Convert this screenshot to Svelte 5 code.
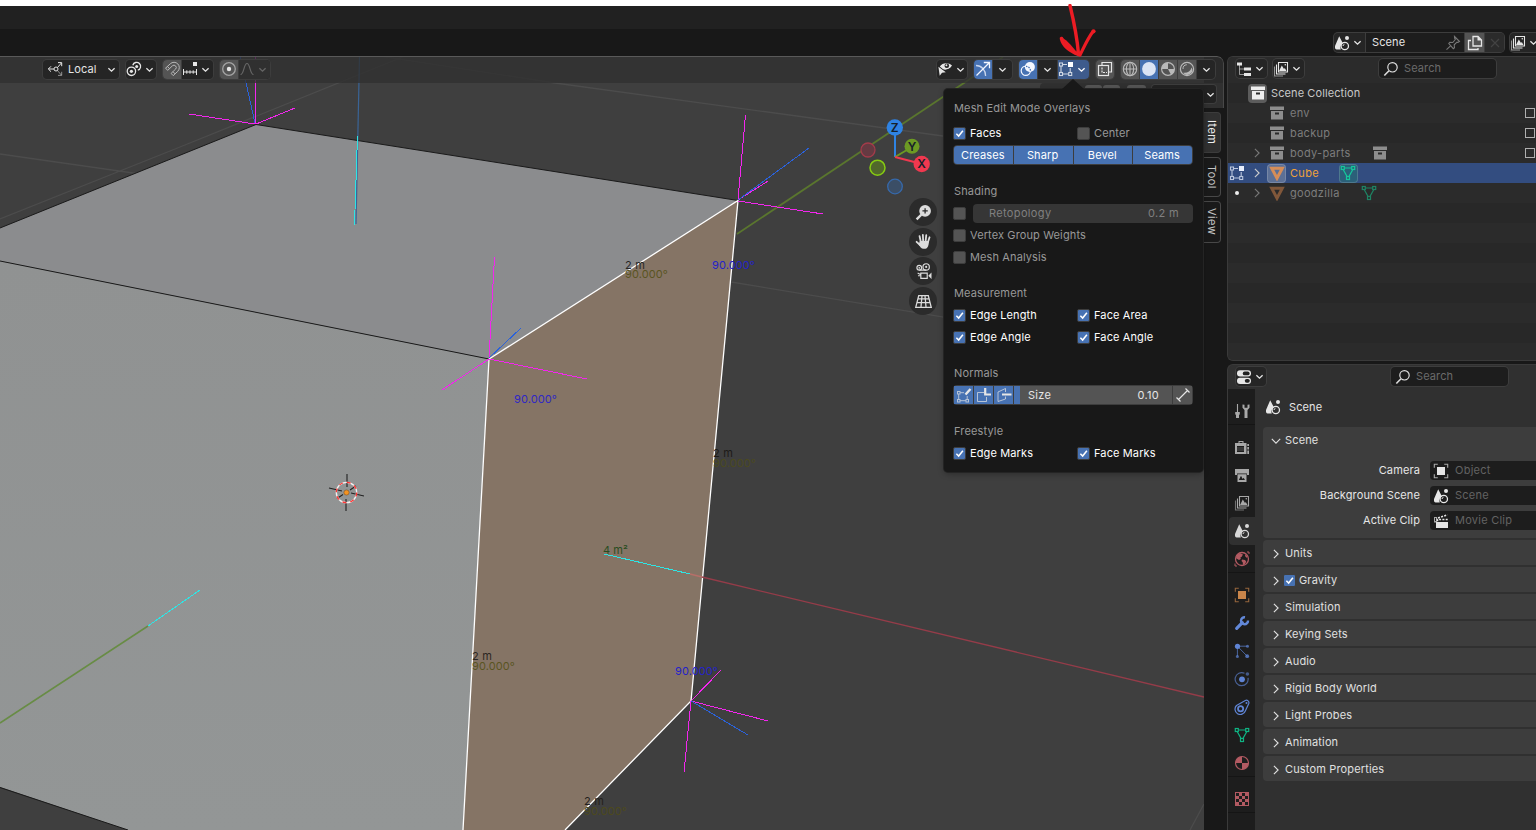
<script>
  const icons = {
    chev: '<path d="M4.700 6.600 8 9.800l3.300-3.200" fill="none" stroke="currentColor" stroke-width="1.400"/>',
    right: '<path d="M5.600 3.200 10.400 8l-4.800 4.800" fill="none" stroke="currentColor" stroke-width="1.300"/>',
    down: '<path d="M3.200 5.600 8 10.400l4.800-4.800" fill="none" stroke="currentColor" stroke-width="1.300"/>',
    orient: '<g fill="none" stroke="currentColor"><circle cx="9" cy="8" r="2"/><path d="M7 8H1.500M4 5.300 1.300 8 4 10.700M10.400 6.600l4-4.600M11 1.600h3.700v3.600"/><path d="m10.400 9.500 4 4.600M11 14.400h3.700v-3.600" opacity=".55"/></g>',
    pivot: '<g fill="none" stroke="currentColor" stroke-width="1.300"><circle cx="5.400" cy="10.300" r="4.200"/><path d="M6.800 4.200a4 4 0 1 1 5 5"/></g><circle cx="5.400" cy="10.300" r="1.600" fill="currentColor"/><circle cx="10.700" cy="5.500" r="1.500" fill="currentColor"/>',
    magnet: '<g fill="none" stroke="currentColor" stroke-width="1"><path d="M1.500 7.200 6.300 2.800a5.300 5.300 0 0 1 7.400 7.600l-4.500 4.200-2.100-2.200 4.500-4.300a2.300 2.300 0 0 0-3.200-3.300L3.800 9.300z"/><path d="m3.400 5.500 2.200 2.200M9 10.700l2.100 2.200"/></g>',
    snapinc: '<path d="M1.500 8v6M14.500 8v6M1.500 11h13M4.800 9.300v3.400M8 9.300v3.400M11.200 9.300v3.400" stroke="currentColor" fill="none"/><rect x="11" y="1" width="4" height="4" fill="currentColor"/>',
    prop: '<circle cx="8" cy="8" r="6.300" fill="none" stroke="currentColor" opacity=".55" stroke-width="1.300"/><circle cx="8" cy="8" r="2.200" fill="currentColor"/>',
    curve: '<path d="M1.500 13.500c3.600 0 3.200-11 6.500-11s2.900 11 6.500 11" fill="none" stroke="currentColor" stroke-width="1.200"/>',
    vis: '<path d="M2.800 5.400C5 1.800 11.200.7 15 4.600 12 9 7.800 9.200 5.800 8z" fill="currentColor"/><circle cx="9.800" cy="4.800" r="2.300" fill="#252525"/><circle cx="9.400" cy="4.300" r="1" fill="currentColor"/><path d="m1.400 5.800 1.300 9 2.300-3.100 3.800-.4z" fill="currentColor"/>',
    gizmo: '<g fill="none" stroke="currentColor" stroke-width="1.300"><path d="M1 4.500c5.500 0 9.600 4.500 9.600 10.500" opacity=".75"/><path d="M1.500 14.500 14 2M8.800 1.500h5.700v5.700"/></g>',
    overlay: '<circle cx="5.800" cy="9.800" r="4.600" fill="none" stroke="currentColor" stroke-width="1.200"/><circle cx="9.900" cy="6" r="5" fill="currentColor"/><path d="M6 5.300a4.600 4.600 0 0 1 4.400 5.400" fill="none" stroke="#4772b3" stroke-width="1.200" stroke-dasharray="1.500 1"/>',
    edit: '<g fill="none" stroke="currentColor" stroke-width="1.100" opacity=".75"><rect x="1.500" y="2" width="3" height="3"/><rect x="1.500" y="11.500" width="3" height="3"/><rect x="10.700" y="11.500" width="3" height="3"/><path d="M4.500 3.500H9M3 5v6.500M4.500 13h6.200M12.200 7v4.500"/></g><rect x="10" y="1" width="5" height="5" fill="currentColor"/>',
    xray: '<g fill="none" stroke="currentColor" stroke-width="1.200"><path d="M5 4V1.500h9.500V11H12"/><rect x="1.500" y="4.500" width="10" height="10"/><path d="M5 6.500v5h5" stroke-dasharray="2 1"/></g>',
    globe: '<g fill="none" stroke="currentColor" stroke-width="1.100"><circle cx="8" cy="8" r="6.700"/><ellipse cx="8" cy="8" rx="3.600" ry="6.700"/><path d="M1.300 8h13.400M8 1.300v13.400"/></g>',
    ball: '<circle cx="8" cy="8" r="6.900" fill="#dbe4f5"/>',
    matprev: '<circle cx="8" cy="8" r="6.400" fill="none" stroke="currentColor" stroke-width="1.200"/><path d="M8 1.600A6.400 6.400 0 0 0 1.600 8H8l3 5.800A6.400 6.400 0 0 0 14.400 8H8z" fill="currentColor"/>',
    rendered: '<circle cx="8" cy="8" r="6.600" fill="none" stroke="currentColor" stroke-width="1.200"/><path d="M12.700 6.500a5 5 0 0 1-8.500 5.200 8 8 0 0 0 8.500-5.200z" fill="currentColor"/><path d="M4 8a4.200 4.200 0 0 1 3.800-4.300" fill="none" stroke="currentColor"/>',
    scene: '<path d="M5.200 1.300 9 8.500a4.500 4.500 0 0 0-2.200 6H2.600C.8 14.500.8 11.500 1.200 10.500z" fill="currentColor"/><circle cx="10.800" cy="11" r="3.700" fill="none" stroke="currentColor" stroke-width="1.300"/><circle cx="13" cy="3" r="2" fill="currentColor"/><path d="M9 11a2 2 0 0 1 1.500-1.800" fill="none" stroke="currentColor"/>',
    pin: '<path d="M9.500 1.500 14.500 6.500 13 7.500l-1-.3-2.800 2.600.3 3-1.200.9L3.800 8.500l1-1.200 3 .2L10.300 4.500l-.7-1.500zM5.800 10.700 1.500 14.700" fill="none" stroke="currentColor" stroke-width="1.100"/>',
    copy: '<path d="M6 1.500h5l3.500 3.500v6H6z" fill="none" stroke="currentColor" stroke-width="1.300"/><path d="M10.500 1v4.500H15z" fill="currentColor"/><path d="M4 5.500H1.500v9H11V13" fill="none" stroke="currentColor" stroke-width="1.300"/>',
    close: '<path d="m4 4 8 8M12 4l-8 8" stroke="currentColor" stroke-width="1.200"/>',
    layers: '<g fill="none" stroke="currentColor" stroke-width="1.100"><path d="M5.500 1.500h9V11h-9zM3.500 3.500v9.500h9" /><path d="M1.500 5.500V15H10" opacity=".6"/></g><path d="m6 10 2.800-5.500L11 8l.8-1L13.500 10z" fill="currentColor"/><circle cx="12.300" cy="3.800" r=".8" fill="currentColor"/>',
    tree: '<path d="M3.500 3v10.500H8M3.500 8H8" fill="none" stroke="currentColor" opacity=".6"/><path d="M1 1.500h5v3H1zM8 6.500h7v3H8zM8 12h7v3H8z" fill="currentColor"/>',
    search: '<circle cx="9.500" cy="6.300" r="4.700" fill="none" stroke="currentColor" stroke-width="1.200"/><path d="m6 9.800-4.700 4.700" stroke="currentColor" stroke-width="1.600"/>',
    coll: '<path d="M1 1.500h14V5H1zM2 6h12v8.500H2z" fill="currentColor"/><rect x="6" y="7.500" width="4" height="2" fill="#2b2b2b"/>',
    mesho: '<path d="M2.700 3.200h10.600L8 13.300z" fill="none" stroke="currentColor" stroke-width="3"/>',
    meshd: '<g fill="none" stroke="currentColor" stroke-width="1.200"><rect x="1.300" y="1.500" width="3" height="3"/><rect x="11.700" y="1.500" width="3" height="3"/><rect x="6.500" y="11.500" width="3" height="3"/><path d="M4.300 3h7.400M3.300 4.800l3.700 6.600M12.700 4.800 9 11.400"/></g>',
    props: '<rect x="1" y="1.300" width="14" height="6.200" rx="3" fill="currentColor"/><rect x="1" y="8.700" width="14" height="6.200" rx="3" fill="currentColor"/><rect x="6.800" y="2.500" width="6.800" height="3.800" rx="1.900" fill="#222"/><rect x="8.800" y="9.900" width="5" height="3.800" rx="1.900" fill="#222"/>',
    tool: '<path d="M3.500 1v8" stroke="currentColor" stroke-width="1.100"/><path d="M1.200 9h4.600v2.200L5 12v3H2v-3l-.8-.8z" fill="currentColor"/><path d="M8.500 1.500v3.300l2 2.200v8h3V7l2-2.200V1.500l-2 .2v3h-3v-3z" fill="currentColor"/>',
    render: '<path d="M4.500 4V2h5v2M1 4h11.500v11H1zM13.300 5H15v10h-1.700z" fill="currentColor"/><path d="M5.500 3h3v1h-3z" fill="#1d1d1d"/><path d="M3 7h7v6H3z" fill="#1d1d1d"/><path d="M3 9h7M3 11h7" stroke="currentColor" opacity=".5" stroke-width=".8"/><path d="M13 7.500h3M13 11h3" stroke="#1d1d1d"/>',
    output: '<path d="M1 2h14v4.500H1zM3.500 7.300h9V15h-9z" fill="currentColor"/><path d="M1 6h2v2H1zM13 6h2v2h-2z" fill="currentColor"/><path d="m4.800 13 2.200-4.200L8.700 12l.9-1.200 1.400 2.200z" fill="#1d1d1d"/>',
    world: '<circle cx="8" cy="8" r="6.500" fill="none" stroke="currentColor" stroke-width="1.300"/><path d="M2.500 4 6 2.300 9 3.500 7.500 6l-1 .3.3 1.700L5 9 2 7.200zM8 8.500l3 .5 1.300 1.700-1.700 2.800L9 14l-.3-2.800L7.500 10zM11.500 3l2.300 3-1.300.7L11 5z" fill="currentColor"/><path d="M1 12.500V15h2M13 1h2v2" fill="none" stroke="currentColor"/>',
    object: '<path d="M4 4h8v8H4z" fill="currentColor"/><path d="M1.300 4.800V1.300h3.500M11.200 1.300h3.500v3.500M14.700 11.200v3.500h-3.500M4.800 14.700H1.300v-3.500" fill="none" stroke="currentColor" opacity=".7" stroke-width="1.100"/>',
    wrench: '<path d="M2.700 13.300 8.300 7.700" stroke="currentColor" stroke-width="3.200" stroke-linecap="round"/><path d="M11 2.300a3.500 3.500 0 1 0 3 3.200" fill="none" stroke="currentColor" stroke-width="2.400"/>',
    particles: '<path d="M3.400 3.200h10M3.400 3.200v10M3.400 3.200l9.800 10" stroke="currentColor" opacity=".7"/><circle cx="3.500" cy="3.300" r="2.600" fill="currentColor"/><circle cx="13.500" cy="3.200" r="1.500" fill="currentColor" opacity=".7"/><circle cx="3.400" cy="13.500" r="1.500" fill="currentColor" opacity=".7"/><circle cx="13.200" cy="13.200" r="1.900" fill="currentColor" opacity=".8"/>',
    physics: '<path d="M10.500 2.300a6.500 6.500 0 1 0 3.500 4.500" fill="none" stroke="currentColor" opacity=".65" stroke-width="1.200"/><circle cx="8" cy="8.300" r="2.900" fill="currentColor"/><circle cx="13.400" cy="3" r="1.800" fill="currentColor" opacity=".6"/>',
    constraint: '<path d="M2.500 6.500 11.300 1.500a2.500 2.500 0 0 1 3.500 3L11.300 12a5.300 5.300 0 1 1-8.800-5.500z" fill="none" stroke="currentColor" stroke-width="1.200"/><circle cx="6.600" cy="9.800" r="2.600" fill="none" stroke="currentColor" stroke-width="1.800"/><circle cx="12.500" cy="4" r="1" fill="currentColor"/>',
    material: '<circle cx="8" cy="8" r="6.500" fill="none" stroke="currentColor" stroke-width="1.200"/><path d="M8 1.500V8H1.500A6.500 6.500 0 0 1 8 1.500zM8 8h6.500A6.500 6.500 0 0 1 8 14.500z" fill="currentColor"/>',
    texture: '<rect x="1.500" y="1.500" width="13" height="13" fill="none" stroke="currentColor"/><path d="M5 2h3v3H5zM11 2h3v3h-3zM2 5h3v3H2zM8 5h3v3H8zM5 8h3v3H5zM11 8h3v3h-3zM2 11h3v3H2zM8 11h3v3H8z" fill="currentColor"/>',
    clip: '<path d="M3 9h12v6H3z" fill="currentColor"/><path d="M4.500 8.200V6.500H15M5 5 14.500 1.800" fill="none" stroke="currentColor" stroke-width="1.600" stroke-dasharray="2 1.300"/><rect x="1.500" y="4.500" width="2" height="4.500" fill="none" stroke="currentColor" opacity=".7"/>',
    nvert: '<g fill="none" stroke="currentColor" opacity=".7"><rect x="1.500" y="4.500" width="2.500" height="2.500"/><rect x="1.500" y="12.500" width="2.500" height="2.500"/><rect x="10" y="12.500" width="2.500" height="2.500"/><path d="M4 5.700h4M2.700 7v5.500M4 13.700h6M11.200 9v3.500"/></g><path d="m9.500 7.500 5-5.500" stroke="currentColor" stroke-width="2.400"/>',
    nedge: '<path d="M8 5.500H1.500v9h9V10" fill="none" stroke="currentColor" opacity=".7"/><path d="M9.200 1v6.500H15" fill="none" stroke="currentColor" stroke-width="2.200"/>',
    nface: '<path d="M9.500 5V1.500L2 5v9.500L9.500 12V9.500" fill="none" stroke="currentColor" opacity=".7"/><path d="M6 7.500h9.500" stroke="currentColor" stroke-width="2"/>',
    nsize: '<path d="M3.500 12.500 12.500 3.500M1.500 10.500l4 4M10.500 1.500l4 4" fill="none" stroke="currentColor" stroke-width="1.200"/>',
    zoom: '<circle cx="9.500" cy="6.500" r="5.500" fill="currentColor"/><path d="M9.500 4v5M7 6.500h5" stroke="#2a2a2a" stroke-width="1.200"/><path d="m6 10-4.500 4.500" stroke="currentColor" stroke-width="2.200"/>',
    hand: '<g stroke="currentColor" stroke-width="1.700" stroke-linecap="round" fill="none"><path d="M5.400 8 4.300 3M7.700 7.500 7.400 1.700M10 7.500l.6-5.500M12.200 8.500l1.500-4.500M5 11.500 1.500 8.300"/></g><path d="M4.500 7.500h8.600c0 3-.8 7-3.300 7.300H8c-2 0-3.500-2-4.500-4z" fill="currentColor"/>',
    camera: '<g fill="none" stroke="currentColor" stroke-width="1.100"><circle cx="4" cy="4.500" r="2.200"/><circle cx="10.500" cy="3.700" r="3"/><path d="M4 6.700h6.500M5.500 9.500h6v5h-6zM5.500 11 2.500 9.500M2.800 12h2.700"/></g><path d="M15.500 9v6L12.500 12z" fill="currentColor"/><circle cx="10.500" cy="3.700" r="1" fill="currentColor"/><circle cx="4" cy="4.500" r=".8" fill="currentColor"/>',
    grid: '<path d="M3.500 2.500h9L15.300 13.500H.7zM2.800 5.500h10.400M1.900 9h12.300M6.600 2.500l-1 11M9.400 2.500l1 11" fill="none" stroke="currentColor" stroke-width="1.200"/>'
  };

  const M = '#f326ee', B = '#2b62d9', C = '#2ee5e5';
  const lines = [
    [189,114,255,124,M],[255.5,56,255.5,124,M],[295,108,256,124,M],[240,56,255,123,B],
    [745.5,115,738,200,M],[768,181,738,200,M],[823,214,738,201,M],[809,148,738,200,B],
    [494.5,257,489,358,M],[442,390,489,359,M],[587,379,489,359,M],[521,328,489,358,B],
    [721,670,691,701,M],[768,721,691,701,M],[684,772,691,701,M],[748,735,691,701,B],
    [357.5,136,354.5,225,C],[604,554,690,574,C],[148,626,200,590,C]
  ];
  const labels = [
    [625,269,'2 m','#262626',20],[625,278,'90.000°','#5a5423',43],[712,269,'90.000°','#2422c8',43],
    [514,403,'90.000°','#2f27c4',43],[713,457,'2 m','#1d1b18',20],[713,467,'90.000°','#4b4a1f',43],
    [603,554,'4 m²','#294d1f',25],[472,660,'2 m','#2b2622',20],[472,670,'90.000°','#5a5423',43],
    [675,675,'90.000°','#2422c8',43],[584,805,'2 m','#231f1c',20],[584,815,'90.000°','#4d4a1d',43]
  ];
  const shading = ['globe', 'ball', 'matprev', 'rendered'];
  const tabs = [
    [['tool', '#a8a8a8']],
    [['render', '#a8a8a8'], ['output', '#a8a8a8'], ['layers', '#a8a8a8'], ['scene', '#d8d8d8'], ['world', '#b35a62']],
    [['object', '#c9854a'], ['wrench', '#6288d8'], ['particles', '#5f84d4'], ['physics', '#5f84d4'], ['constraint', '#5f84d4'], ['meshd', '#10b383'], ['material', '#b35a62']],
    [['texture', '#b35a62']]
  ];
  const fields = [['Camera', 'object', 'Object'], ['Background Scene', 'scene', 'Scene'], ['Active Clip', 'clip', 'Movie Clip']];
  const panels = ['Units', 'Gravity', 'Simulation', 'Keying Sets', 'Audio', 'Rigid Body World', 'Light Probes', 'Animation', 'Custom Properties'];
  const navs = ['zoom', 'hand', 'camera', 'grid'];
</script>

{#snippet icon(name, size = 16)}
  <svg class="icon" width={size} height={size} viewBox="0 0 16 16">{@html icons[name]}</svg>
{/snippet}

{#snippet check(label, on = true)}
  <div class="check" class:off={!on}>
    <span class="box">{#if on}<svg width="13" height="13" viewBox="0 0 13 13"><path d="m2.800 6.800 2.700 2.700L10.500 3.300" fill="none" stroke="#fff" stroke-width="1.800" /></svg>{/if}</span>
    <span>{label}</span>
  </div>
{/snippet}

<div class="app">
  <div class="strip"></div>
  <div class="menubar"></div>
  <div class="topbar">
    <div class="group scene-sel">
      <div class="cell w31">{@render icon('scene')}{@render icon('chev', 15)}</div>
      <div class="cell name"><span>Scene</span><i>{@render icon('pin')}</i></div>
      <div class="cell lit w19">{@render icon('copy')}</div>
      <div class="cell dim w19">{@render icon('close')}</div>
    </div>
    <div class="group layer-sel"><div class="cell w31">{@render icon('layers')}{@render icon('chev', 15)}</div></div>
  </div>

  <div class="main">
    <section class="viewport">
      <svg class="canvas" width="1204" height="774" viewBox="0 56 1204 774">
        <defs>
          <linearGradient id="front" x1="0" y1="0" x2="0" y2="1"><stop offset="0" stop-color="#909292" /><stop offset="1" stop-color="#939696" /></linearGradient>
        </defs>
        <rect y="56" width="1204" height="774" fill="#3f3f3f" />
        <g stroke="#4c4c4c" stroke-width="1.300">
          <path d="M0 154 140 174M0 219 180 147 410 54M360 53 555 83 943 136M731 282 1204 360M1190 830 1204 804" fill="none" />
        </g>
        <path d="M737 234 1003 57" stroke="#5a762e" stroke-width="1.700" />
        <path d="M0 228 256 124.500 738 200.500 489 359 0 261z" fill="#8b8c8e" />
        <path d="M0 261 489 359 463 830H128L0 787z" fill="url(#front)" />
        <path d="M489 359 738 200.500 691 701 565 830H463z" fill="#857465" />
        <path d="M0 228 256 124.500 738 200.500M0 261 489 359M0 787.500 128 830" fill="none" stroke="#1a1a1a" />
        <path d="M463 830 489 359 738 200.500 691 701 565 830" fill="none" stroke="#fff" stroke-width="1.300" />
        <path d="M359.500 56 356 224" stroke="#3a6496" stroke-width="1.200" />
        <path d="M702 577 1204 697" stroke="#953c49" stroke-width="1.300" />
        <path d="M690 574 702 577" stroke="#b76f69" stroke-width="1.300" />
        <path d="M0 723 148 626" stroke="#688c45" stroke-width="1.500" />
        <g shape-rendering="crispEdges">
          {#each lines as [x1, y1, x2, y2, c]}<line {x1} {y1} {x2} {y2} stroke={c} />{/each}
        </g>
        <g stroke="#222" stroke-width="1.100">
          <path d="M347 474v13M346 499v12M329 488l13 3M351 493l13 3M337 498.500l6-4M350 490l6-4" />
        </g>
        <circle cx="346.500" cy="492.500" r="10.200" fill="none" stroke="#f2f2f2" stroke-width="1.300" />
        <circle cx="346.500" cy="492.500" r="10.200" fill="none" stroke="#f33" stroke-width="1.300" stroke-dasharray="4 4" />
        <circle cx="346.500" cy="492.500" r="2.600" fill="#f59320" stroke="#7a5228" stroke-width=".6" />
        {#each labels as [x, y, t, c, w]}<text {x} {y} fill={c} textLength={w}>{t}</text>{/each}
        <path d="M895 157V128" stroke="#2f83e3" stroke-width="2" />
        <path d="M895 157 912 147" stroke="#6c9a23" stroke-width="2" />
        <path d="M895 157 922 164" stroke="#f0384f" stroke-width="2" />
        <circle cx="868" cy="150" r="7" fill="#653a42" stroke="#a33b4a" stroke-width="1.300" />
        <circle cx="877.500" cy="167.700" r="7.500" fill="#51682b" stroke="#86cb12" stroke-width="1.500" />
        <circle cx="895" cy="186.500" r="7.300" fill="#3b4e66" stroke="#3669ab" stroke-width="1.300" />
        <circle cx="894.800" cy="127.500" r="8.200" fill="#2f83e3" />
        <circle cx="912" cy="146.300" r="7.500" fill="#6c9a23" />
        <circle cx="921.700" cy="164" r="8.200" fill="#f0384f" />
        <g class="axis"><text x="894.800" y="132">Z</text><text x="912" y="150.600">Y</text><text x="921.700" y="168.300">X</text></g>
      </svg>

      <div class="vheader">
        <div class="group local"><div class="cell w19">{@render icon('orient')}</div><span>Local</span>{@render icon('chev', 15)}</div>
        <div class="group"><div class="cell w30">{@render icon('pivot')}{@render icon('chev', 15)}</div></div>
        <div class="group"><div class="cell lit w18 soft">{@render icon('magnet')}</div><div class="cell w31">{@render icon('snapinc')}{@render icon('chev', 15)}</div></div>
        <div class="group"><div class="cell lit w18">{@render icon('prop')}</div><div class="cell w31 faded">{@render icon('curve')}{@render icon('chev', 15)}</div></div>
        <div class="spacer"></div>
        <div class="group"><div class="cell w30">{@render icon('vis')}{@render icon('chev', 15)}</div></div>
        <div class="group"><div class="cell blue w18">{@render icon('gizmo')}</div><div class="cell w19">{@render icon('chev', 15)}</div></div>
        <div class="group"><div class="cell blue w18">{@render icon('overlay')}</div><div class="cell w19">{@render icon('chev', 15)}</div><div class="cell navy w31">{@render icon('edit')}{@render icon('chev', 15)}</div></div>
        <div class="group"><div class="cell lit w17">{@render icon('xray')}</div></div>
        <div class="group">
          {#each shading as s}<div class="cell w18 {s === 'ball' ? 'blue' : 'lit soft'}">{@render icon(s)}</div>{/each}
          <div class="cell w18">{@render icon('chev', 15)}</div>
        </div>
      </div>

      <div class="toolrow"><div class="stub b1"></div><div class="stub b1"></div><div class="stub b2"></div><div class="stub wide">{@render icon('chev', 15)}</div></div>

      <div class="nregion">
        <div class="ntab h40 on">Item</div><div class="ntab h39">Tool</div><div class="ntab h41">View</div>
      </div>

      <div class="navs">{#each navs as n}<div class="nav">{@render icon(n, 17)}</div>{/each}</div>

      <div class="popup">
        <div class="pgroup">
          <div class="title first">Mesh Edit Mode Overlays</div>
          <div class="two">{@render check('Faces')}{@render check('Center', false)}</div>
          <div class="seg"><span>Creases</span><span>Sharp</span><span>Bevel</span><span>Seams</span></div>
        </div>
        <div class="pgroup">
          <div class="title">Shading</div>
          <div class="retop"><span class="box"></span><div class="slider"><span>Retopology</span><span>0.2 m</span></div></div>
          {@render check('Vertex Group Weights', false)}
          {@render check('Mesh Analysis', false)}
        </div>
        <div class="pgroup">
          <div class="title">Measurement</div>
          <div class="two">{@render check('Edge Length')}{@render check('Face Area')}</div>
          <div class="two">{@render check('Edge Angle')}{@render check('Face Angle')}</div>
        </div>
        <div class="pgroup">
          <div class="title">Normals</div>
          <div class="normals">
            <b>{@render icon('nvert')}</b><b>{@render icon('nedge')}</b><b>{@render icon('nface')}</b>
            <div class="size"><span>Size</span><span>0.10</span></div><u>{@render icon('nsize')}</u>
          </div>
        </div>
        <div class="pgroup">
          <div class="title">Freestyle</div>
          <div class="two">{@render check('Edge Marks')}{@render check('Face Marks')}</div>
        </div>
      </div>
    </section>

    <aside>
      <section class="outliner">
        <div class="ohead">
          <div class="group"><div class="cell w31">{@render icon('tree')}{@render icon('chev', 15)}</div></div>
          <div class="group"><div class="cell w31">{@render icon('layers')}{@render icon('chev', 15)}</div></div>
          <div class="search">{@render icon('search')}<span>Search</span></div>
        </div>
        <div class="orow root"><span class="chip">{@render icon('coll')}</span>Scene Collection</div>
        {#each ['env', 'backup', 'body-parts'] as n, i}
          <div class="orow" class:alt={i % 2 === 0}>
            <span class="mode"></span><span class="arrow">{#if i === 2}{@render icon('right', 14)}{/if}</span><span class="oi">{@render icon('coll')}</span><span class="oname">{n}</span>
            {#if i === 2}<span class="sub">{@render icon('coll')}</span>{/if}
            <span class="vischeck"></span>
          </div>
        {/each}
        <div class="orow sel">
          <span class="mode">{@render icon('edit')}</span><span class="arrow">{@render icon('right', 14)}</span><span class="oi orange chipped">{@render icon('mesho')}</span><span class="oname">Cube</span><span class="sub teal chipped">{@render icon('meshd')}</span>
        </div>
        <div class="orow ghost alt">
          <span class="mode"><em></em></span><span class="arrow">{@render icon('right', 14)}</span><span class="oi brown">{@render icon('mesho')}</span><span class="oname">goodzilla</span><span class="sub green">{@render icon('meshd')}</span>
        </div>
        <div class="stripes"></div>
      </section>

      <section class="properties">
        <div class="phead">
          <div class="group"><div class="cell w30">{@render icon('props')}{@render icon('chev', 15)}</div></div>
          <div class="search">{@render icon('search')}<span>Search</span></div>
        </div>
        <div class="pbody">
          <div class="tabs">
            {#each tabs as g}
              <div class="tgroup">{#each g as [n, c]}<div class="tab" class:active={n === 'scene'} style:color={c}>{@render icon(n)}</div>{/each}</div>
            {/each}
          </div>
          <div class="content">
            <div class="crumb">{@render icon('scene')}<span>Scene</span></div>
            <div class="panel open">
              <div class="plabel">{@render icon('down', 14)}<span>Scene</span></div>
              {#each fields as [l, i, p]}
                <div class="field"><div class="flabel">{l}</div><div class="input">{@render icon(i)}<span>{p}</span></div></div>
              {/each}
            </div>
            {#each panels as p}
              <div class="panel"><div class="plabel">{@render icon('right', 14)}{#if p === 'Gravity'}{@render check(p)}{:else}<span>{p}</span>{/if}</div></div>
            {/each}
          </div>
        </div>
      </section>
    </aside>
  </div>

  <svg class="arrowmark" width="44" height="56" viewBox="1056 4 44 56">
    <path d="M1070 5.500C1074 22 1077 36 1078.500 54" fill="none" stroke="#ec1c24" stroke-width="3.400" stroke-linecap="round" />
    <path d="M1061.500 38.500C1063 45 1070 51 1079 54.500" fill="none" stroke="#ec1c24" stroke-width="3.600" stroke-linecap="round" />
    <path d="M1062 37.500C1068 41 1073 47 1078 54L1068 49z" fill="#ec1c24" />
    <path d="M1093 31.500C1088 38 1084 47 1080 55" fill="none" stroke="#ec1c24" stroke-width="3.200" stroke-linecap="round" />
    <circle cx="1093.500" cy="31.300" r="2.100" fill="#ec1c24" />
  </svg>
</div>

<style>
  :global(body) { margin: 0; background: #181818; overflow: hidden; }
  .app { position: relative; width: 1536px; height: 830px; overflow: hidden; display: flex; flex-direction: column; background: #181818; font: 11px/19px Inter, sans-serif; letter-spacing: .12px; color: #e6e6e6; }
  .app * { box-sizing: border-box; }
  .icon { display: block; flex: none; }
  .strip { height: 6px; background: #fff; flex: none; }
  .menubar { height: 23px; background: #212121; flex: none; }
  .topbar { height: 27px; flex: none; display: flex; align-items: center; padding-left: 1334px; gap: 6px; }
  .group { display: flex; height: 19px; flex: none; border-radius: 4px; overflow: hidden; background: #252525; box-shadow: 0 0 0 1px #3d3d3d; }
  .cell { display: flex; align-items: center; justify-content: center; height: 19px; flex: none; }
  .cell + .cell { border-left: 1px solid #3d3d3d; box-sizing: content-box; }
  .w17 { width: 18px; } .w18 { width: 18px; } .w19 { width: 19px; } .w30 { width: 30px; } .w31 { width: 31px; }
  .name { width: 98px; background: #1d1d1d; justify-content: space-between; }
  .name span { padding-left: 6px; } .name i { color: #777; padding-right: 3px; }
  .lit { background: #545454; }
  .soft { color: #b9b9b9; }
  .dim { background: #2b2b2b; color: #434343; }
  .blue { background: #4772b3; color: #f4f7ff; }
  .navy { background: #3e5b8c; color: #fff; }
  .faded { color: #666; background: #303030; }
  .main { flex: 1; display: flex; gap: 3px; min-height: 0; }
  .viewport { position: relative; width: 1224px; height: 774px; flex: none; display: flex; flex-direction: column; border-radius: 0 7px 0 0; overflow: hidden; background: #181818; }
  .canvas { position: absolute; left: 0; top: 0; }
  .canvas text { font: 11px Inter, sans-serif; }
  .canvas .axis text { font-size: 12px; font-weight: 600; text-anchor: middle; fill: #16202a; }
  .vheader { position: relative; height: 27px; flex: none; display: flex; align-items: center; gap: 7px; padding: 0 8px 2px 43px; background: rgba(48,48,48,.78); border-top: 1px solid #595959; border-right: 1px solid #484848; border-radius: 0 7px 0 0; }
  .local { width: 76px; justify-content: space-between; align-items: center; }
  .local { padding-left: 2px; }
  .local span { flex: 1; padding-left: 4px; }
  .spacer { flex: 1; }
  .toolrow { position: relative; align-self: flex-end; width: 184px; height: 25px; flex: none; background: #303030; display: flex; padding: 2px 7px 0 45px; gap: 1px; border-right: 1px solid #484848; border-radius: 4px 0 0 0; }
  .stub { height: 18px; background: #545454; border-radius: 3px; }
  .b1 { width: 17px; } .b2 { width: 19px; margin-left: 6px; }
  .wide { flex: 1; margin-left: 5px; background: #222; display: flex; align-items: center; justify-content: flex-end; box-shadow: 0 0 0 1px #3d3d3d; }
  .wide .icon { margin-right: -2px; }
  .nregion { position: relative; align-self: flex-end; width: 20px; flex: 1; background: #181818; padding-top: 4px; display: flex; flex-direction: column; gap: 4px; }
  .ntab { width: 17px; writing-mode: vertical-rl; text-align: center; line-height: 16px; background: #1a1a1a; color: #c4c4c4; border: 1px solid #484848; border-left: 0; border-radius: 0 4px 4px 0; letter-spacing: .4px; }
  .ntab.on { background: #303030; color: #eee; border-color: #3c3c3c; }
  .h40 { height: 41px; } .h39 { height: 40px; } .h41 { height: 42px; }
  .navs { position: absolute; left: 909px; top: 142px; display: flex; flex-direction: column; gap: 1.700px; }
  .nav { width: 28px; height: 28px; border-radius: 50%; background: #2b2b2b; display: flex; align-items: center; justify-content: center; color: #dcdcdc; }
  .popup { position: absolute; left: 944px; top: 33px; width: 259px; height: 383px; background: #181818; border-radius: 4px; box-shadow: 0 0 0 1px #242424, 0 2px 6px rgba(0,0,0,.3); padding: 9px 10px 9px 9px; display: flex; flex-direction: column; gap: 16px; color: #fff; }
  .popup::before { content: ''; position: absolute; left: 118px; top: -10px; border: 11px solid transparent; border-top: 0; border-bottom: 10px solid #181818; }
  .pgroup { display: flex; flex-direction: column; gap: 2px; }
  .title { height: 20px; line-height: 20px; color: #999; letter-spacing: .15px; padding-left: 1px; }
  .first { margin-bottom: 3px; }
  .two { display: grid; grid-template-columns: 124px 1fr; }
  .check { display: flex; align-items: center; height: 20px; gap: 3px; white-space: nowrap; }
  .off { color: #999; }
  .box { width: 13px; height: 13px; flex: none; border-radius: 2px; background: #4772b3; border: .500px solid #3d3d3d; display: flex; align-items: center; justify-content: center; margin-right: 1px; }
  .off .box, .retop .box { background: #545454; }
  .seg { display: grid; grid-template-columns: repeat(4, 1fr); gap: 1px; height: 20px; background: #3d3d3d; border: 1px solid #3d3d3d; border-radius: 4px; overflow: hidden; text-align: center; line-height: 18px; }
  .seg span { background: #4772b3; padding-right: 1px; }
  .retop { display: flex; align-items: center; height: 20px; gap: 6px; }
  .slider { flex: 1; height: 19px; background: #363636; border-radius: 4px; display: flex; justify-content: space-between; padding: 0 14px 0 16px; color: #808080; letter-spacing: .35px; }
  .normals { display: flex; height: 20px; gap: 1px; background: #3d3d3d; border-radius: 4px; overflow: hidden; padding: 1px; color: #e6e6e6; }
  .normals b { width: 19px; background: #4772b3; display: flex; justify-content: center; align-items: center; }
  .normals u { width: 19px; background: #545454; display: flex; justify-content: center; align-items: center; }
  .size { flex: 1; background: linear-gradient(90deg, #4772b3 6px, #545454 6px); display: flex; justify-content: space-between; line-height: 18px; padding: 0 13px 0 14px; letter-spacing: .3px; }
  aside { width: 309px; flex: none; display: flex; flex-direction: column; gap: 3px; }
  .outliner { height: 305px; flex: none; background: #282828; border: 1px solid #3a3a3a; border-right: 0; border-radius: 6px 0 0 6px; overflow: hidden; display: flex; flex-direction: column; }
  .ohead { height: 26px; flex: none; display: flex; align-items: center; padding: 0 0 3px 8px; gap: 6px; background: #2b2b2b; }
  .search { width: 117px; height: 19px; background: #1d1d1d; border-radius: 4px; box-shadow: 0 0 0 1px #3d3d3d; display: flex; align-items: center; padding-left: 4px; gap: 5px; color: #ddd; }
  .search span { color: #6b6b6b; }
  .ohead .search { margin-left: 69px; }
  .orow { height: 20px; flex: none; display: flex; align-items: center; color: #7d7d7d; letter-spacing: .3px; }
  .root { color: #c8c8c8; padding-left: 20px; letter-spacing: .1px; }
  .alt { background: #2b2b2b; }
  .chip { width: 19px; height: 19px; border-radius: 4px; background: #5c5c5c; display: flex; align-items: center; justify-content: center; color: #eee; margin-right: 4px; }
  .mode { width: 18px; display: flex; justify-content: center; color: #e8eefc; }
  .mode em { width: 4px; height: 4px; border-radius: 50%; background: #eee; }
  .arrow { width: 21px; display: flex; justify-content: center; color: #777; }
  .oi { width: 19px; height: 19px; display: flex; align-items: center; justify-content: center; color: #8d8d8d; border-radius: 4px; }
  .oname { margin-left: 4px; }
  .sub { width: 19px; height: 19px; margin-left: 20px; display: flex; align-items: center; justify-content: center; color: #8d8d8d; border-radius: 4px; }
  .vischeck { margin-left: auto; width: 10px; height: 10px; border: 1px solid #b0b0b0; margin-right: 1px; }
  .sel { background: #334d80; color: #f0a13a; }
  .sel .arrow { color: #ccc; }
  .orange { color: #d58d58; background: #5c7096; } .teal { color: #15c79c; background: #2b6079; }
  .brown { color: #80573a; } .green { color: #1e8363; }
  .chipped { box-shadow: inset 0 0 0 1px rgba(255,255,255,.16); }
  .ghost { color: #7d7d7d; }
  .stripes { flex: 1; background: repeating-linear-gradient(#282828 0 20px, #2b2b2b 20px 40px); }
  .properties { flex: 1; background: #303030; border: 1px solid #3a3a3a; border-right: 0; border-radius: 6px 0 0 0; overflow: hidden; display: flex; flex-direction: column; border-bottom: 0; }
  .phead { height: 24px; flex: none; display: flex; align-items: center; padding: 0 0 1px 8px; }
  .phead .search { margin-left: 125px; }
  .pbody { flex: 1; display: flex; min-height: 0; }
  .tabs { width: 27px; background: #1d1d1d; flex: none; }
  .tgroup { padding-top: 8px; box-shadow: inset 0 -1px #151515; }
  .tab { height: 28px; display: flex; align-items: center; justify-content: center; padding-bottom: 1px; margin-left: 1px; }
  .active { background: #303030; border-radius: 4px 0 0 4px; }
  .content { flex: 1; padding: 8px 0 0 8px; display: flex; flex-direction: column; gap: 2px; }
  .crumb { display: flex; height: 20px; align-items: center; gap: 8px; padding-left: 2px; margin-bottom: 8px; }
  .panel { height: 25px; flex: none; background: #3d3d3d; border-radius: 4px 0 0 4px; }
  .open { height: 111px; }
  .plabel { height: 26px; padding-top: 1px; display: flex; align-items: center; padding-left: 6px; gap: 2px; color: #e0e0e0; letter-spacing: .15px; }
  .plabel .check { margin-left: -2px; gap: 2px; }
  .open .plabel { margin-bottom: 8px; }
  .field { display: flex; height: 19px; margin-bottom: 6px; align-items: center; }
  .flabel { width: 157px; text-align: right; margin-right: 10px; }
  .input { flex: 1; height: 19px; background: #1d1d1d; border-radius: 4px 0 0 4px; display: flex; align-items: center; padding-left: 3px; gap: 6px; }
  .input span { color: #636363; letter-spacing: .25px; }
  .arrowmark { position: absolute; left: 1056px; top: 4px; }
</style>
